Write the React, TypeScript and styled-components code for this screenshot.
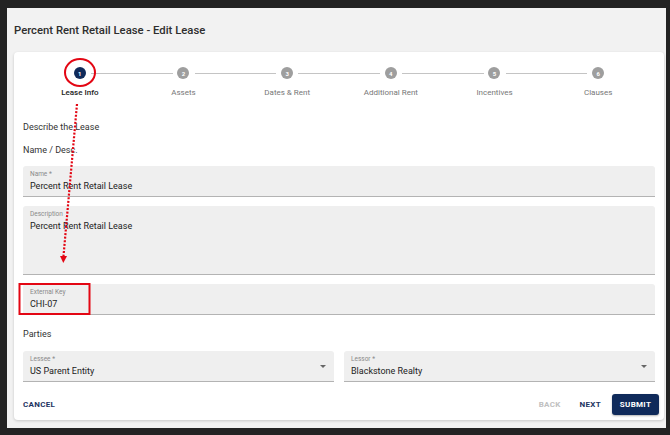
import styled, { createGlobalStyle } from "styled-components"

const GlobalStyle = createGlobalStyle`
  html, body {
    margin: 0;
    padding: 0;
    background: #232323;
    font-family: Roboto, "Liberation Sans", sans-serif;
  }
`

const Page = styled.div`
  position: relative;
  width: 670px;
  height: 435px;
  padding: 8px 4px 7px 7px;
  box-sizing: border-box;
`

const Frame = styled.div`
  width: 659px;
  height: 420px;
  background: #f2f2f2;
  display: flex;
  flex-direction: column;
`

const Header = styled.div`
  height: 44px;
  display: flex;
  align-items: center;
  padding: 0 7px;
`

const Title = styled.h1`
  margin: 0;
  padding-top: 1px;
  font-size: 11.3px;
  font-weight: 500;
  color: #2e2e2e;
`

const Card = styled.div`
  margin: 0 2px 0 7px;
  height: 368px;
  background: #fff;
  border-radius: 4px;
  box-shadow: 0 1px 3px rgba(0, 0, 0, 0.18);
  padding: 0 9px 5px;
  box-sizing: border-box;
  display: flex;
  flex-direction: column;
`

const Stepper = styled.div`
  display: grid;
  grid-template-columns: repeat(6, 1fr);
  margin: 0 5px;
  padding-top: 15px;
`

const Step = styled.div`
  position: relative;
  display: flex;
  flex-direction: column;
  align-items: center;
`

const Connector = styled.span`
  position: absolute;
  top: 6px;
  left: calc(-50% + 11px);
  right: calc(50% + 11px);
  border-top: 1px solid #c4c4c4;
`

const Dot = styled.span<{ $active?: boolean }>`
  width: 12px;
  height: 12px;
  border-radius: 50%;
  background: ${(p) => (p.$active ? "#0f2a5a" : "#9e9e9e")};
  color: #fff;
  font-size: 6px;
  font-weight: 700;
  display: flex;
  align-items: center;
  justify-content: center;
  position: relative;
  z-index: 1;
`

const StepLabel = styled.span<{ $active?: boolean }>`
  margin-top: 9px;
  font-size: 8px;
  line-height: 10px;
  font-weight: ${(p) => (p.$active ? 500 : 400)};
  color: ${(p) => (p.$active ? "#222" : "#777")};
`

const Heading = styled.div<{ $mt: number }>`
  margin-top: ${(p) => p.$mt}px;
  font-size: 9px;
  line-height: 12px;
  color: #333;
`

const Field = styled.div<{ $h: number; $mt: number }>`
  position: relative;
  margin-top: ${(p) => p.$mt}px;
  height: ${(p) => p.$h}px;
  background: #efefef;
  border-bottom: 1px solid #b3b3b3;
  border-radius: 3px 3px 0 0;
  padding: 4px 7px 0;
  box-sizing: border-box;
`

const FieldLabel = styled.div`
  font-size: 6.5px;
  line-height: 8px;
  color: #8a8a8a;
`

const FieldValue = styled.div`
  margin-top: 2px;
  font-size: 9px;
  line-height: 12px;
  color: #222;
`

const Caret = styled.span`
  position: absolute;
  right: 8px;
  top: 14px;
  width: 0;
  height: 0;
  border-left: 3px solid transparent;
  border-right: 3px solid transparent;
  border-top: 3px solid #666;
`

const Row = styled.div`
  display: grid;
  grid-template-columns: 1fr 1fr;
  column-gap: 10px;
`

const Actions = styled.div`
  margin: 12px -4px 0 0;
  display: flex;
  align-items: center;
`

const TextButton = styled.button<{ $muted?: boolean; $ml?: number }>`
  border: none;
  background: none;
  padding: 0;
  margin-left: ${(p) => p.$ml ?? 0}px;
  font-family: inherit;
  font-size: 8px;
  font-weight: 700;
  letter-spacing: 0.3px;
  color: ${(p) => (p.$muted ? "#c0c0c0" : "#1d3461")};
`

const Spacer = styled.div`
  flex: 1;
`

const Submit = styled.button`
  margin-left: 11px;
  width: 47px;
  height: 21px;
  border: none;
  border-radius: 3px;
  background: #0f2a5a;
  color: #fff;
  font-family: inherit;
  font-size: 8px;
  font-weight: 700;
  letter-spacing: 0.3px;
  box-shadow: 0 1px 2px rgba(0, 0, 0, 0.3);
`

const Annotation = styled.svg`
  position: absolute;
  left: 0;
  top: 0;
  pointer-events: none;
`

const steps = ["Lease Info", "Assets", "Dates & Rent", "Additional Rent", "Incentives", "Clauses"]

export default function App() {
  return (
    <>
      <GlobalStyle />
      <Page>
        <Frame>
          <Header>
            <Title>Percent Rent Retail Lease - Edit Lease</Title>
          </Header>
          <Card>
            <Stepper>
              {steps.map((label, i) => (
                <Step key={label}>
                  {i > 0 && <Connector />}
                  <Dot $active={i === 0}>{i + 1}</Dot>
                  <StepLabel $active={i === 0}>{label}</StepLabel>
                </Step>
              ))}
            </Stepper>

            <Heading $mt={23}>Describe the Lease</Heading>
            <Heading $mt={11}>Name / Desc.</Heading>

            <Field $h={31} $mt={10}>
              <FieldLabel>Name *</FieldLabel>
              <FieldValue>Percent Rent Retail Lease</FieldValue>
            </Field>
            <Field $h={69} $mt={9}>
              <FieldLabel>Description</FieldLabel>
              <FieldValue>Percent Rent Retail Lease</FieldValue>
            </Field>
            <Field $h={31} $mt={9}>
              <FieldLabel>External Key</FieldLabel>
              <FieldValue>CHI-07</FieldValue>
            </Field>

            <Heading $mt={13}>Parties</Heading>

            <Row>
              <Field $h={31} $mt={11}>
                <FieldLabel>Lessee *</FieldLabel>
                <FieldValue>US Parent Entity</FieldValue>
                <Caret />
              </Field>
              <Field $h={31} $mt={11}>
                <FieldLabel>Lessor *</FieldLabel>
                <FieldValue>Blackstone Realty</FieldValue>
                <Caret />
              </Field>
            </Row>

            <Actions>
              <TextButton>CANCEL</TextButton>
              <Spacer />
              <TextButton $muted>BACK</TextButton>
              <TextButton $ml={19}>NEXT</TextButton>
              <Submit>SUBMIT</Submit>
            </Actions>
          </Card>
        </Frame>

        <Annotation width="670" height="435" viewBox="0 0 670 435">
          <ellipse cx="80" cy="72.5" rx="15" ry="13.5" fill="none" stroke="#e30613" strokeWidth="2" />
          <line x1="77" y1="104" x2="63.5" y2="256" stroke="#e30613" strokeWidth="2.2" strokeDasharray="2 1.6" />
          <polygon points="60,256 67,256 63.3,263" fill="#e30613" />
          <rect x="19.5" y="284" width="70" height="30" fill="none" stroke="#e30613" strokeWidth="2" />
        </Annotation>
      </Page>
    </>
  )
}
